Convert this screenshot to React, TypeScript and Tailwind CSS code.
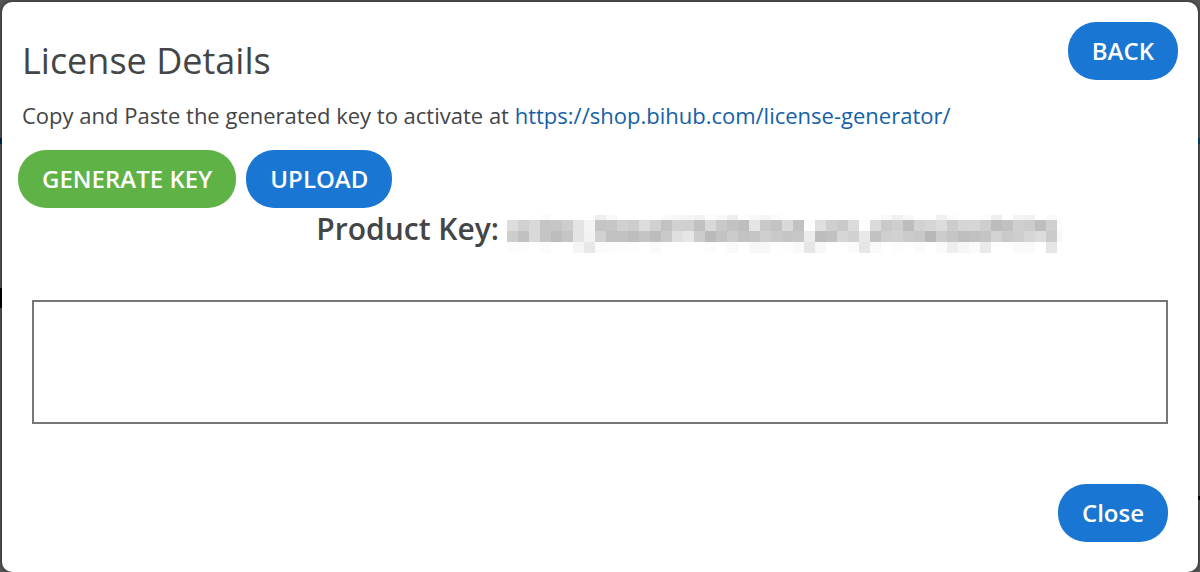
const CELL = 11;

// Grey level of each cell in the obscured key, two hex digits per cell.
const KEY_ROWS = [
  { y: 0, height: 5, cells: 'fffffffbffffffffeef8fffffffffaf6f6f2fcf8eefdf8f5fbfffffffffffffffffff8f0f8fffff0fbfffffceefff4f2fff9ff' },
  { y: 5, height: 11, cells: 'ddd1d9c5c6cde4f4c5c6d1cdddd1c2d1d0c1d9c9c2bee5c9c3d9c1fddfcfc9dbfddbc9cebdd2d6dcccd6d6cebcc1cfccbecffc' },
  { y: 16, height: 11, cells: 'cdc1d9c5bdc5e4f2d1c2c2bec4bdc9e0e7ccbac3cbc2c5cfc9c5c7ecbdc1d6d1e9c2cfd1cbc8b8ccc5bec1c4d2c9cdd6dccbf8' },
  { y: 27, height: 11, cells: 'fcfdfffbfffff5e7fbfcfdfdfffafffffffffcfff9fff7f7fffdf9e6f7fffffbe6f9fffdfffbfffaeef6fbeafffffafaffe5ff' },
];

function ObscuredKey() {
  return (
    <svg width="555" height="38" viewBox="0 0 555 38" role="img" aria-label="Hidden product key" shapeRendering="crispEdges" className="block">
      {KEY_ROWS.map((row) =>
        (row.cells.match(/../g) ?? []).map((level, i) => (
          <rect key={`${row.y}-${i}`} x={i * CELL} y={row.y} width={CELL} height={row.height} fill={`#${level}${level}${level}`} />
        )),
      )}
    </svg>
  );
}

type PillProps = { label: string; tone?: 'blue' | 'green' };

function PillButton({ label, tone = 'blue' }: PillProps) {
  const color = tone === 'green' ? 'bg-[#5fb246]' : 'bg-[#1976d2]';
  return (
    <button type="button" className={`h-[58px] shrink-0 rounded-[28px] px-6 text-2xl font-semibold text-white ${color}`}>
      {label}
    </button>
  );
}

export default function App() {
  return (
    <div className="flex min-h-screen bg-[#555555] font-['Open_Sans',sans-serif] text-[#434547]">
      <div aria-hidden="true" className="w-0.5 shrink-0 pt-[138px]">
        <div className="h-1.5 bg-[#002b55]" />
        <div className="mt-[144px] h-5 bg-black" />
      </div>
      <section role="dialog" aria-labelledby="license-title" className="mt-0.5 min-w-0 flex-1 rounded-[10px] bg-white pt-5 pb-[30px] shadow-[0_0_4px_rgba(0,0,0,0.6)]">
        <header className="flex items-start justify-between px-5">
          <h1 id="license-title" className="pt-3 text-4xl leading-[54px]">License Details</h1>
          <PillButton label="BACK" />
        </header>
        <p className="px-5 pt-3 text-[22px] leading-[30px]">
          Copy and Paste the generated key to activate at{' '}
          <a href="https://shop.bihub.com/license-generator/" className="text-[#155fa8]">https://shop.bihub.com/license-generator/</a>
        </p>
        <div className="flex gap-2.5 px-4 pt-5">
          <PillButton label="GENERATE KEY" tone="green" />
          <PillButton label="UPLOAD" />
        </div>
        <div className="flex items-start justify-end gap-2 pt-[3px] pr-[136px]">
          <label htmlFor="license-key" className="text-3xl leading-9 font-semibold">Product Key:</label>
          <div className="pt-1"><ObscuredKey /></div>
        </div>
        <div className="px-[30px] pt-[47px]">
          <textarea id="license-key" className="block h-[124px] w-full resize-none border-2 border-[#767676] bg-white p-1 text-[22px]" />
        </div>
        <footer className="flex justify-end px-[30px] pt-[60px]">
          <PillButton label="Close" />
        </footer>
      </section>
      <div aria-hidden="true" className="w-0.5 shrink-0 pt-[138px]">
        <div className="h-1.5 bg-[#003a6b]" />
        <div className="mt-[352px] h-1 bg-black" />
      </div>
    </div>
  );
}
